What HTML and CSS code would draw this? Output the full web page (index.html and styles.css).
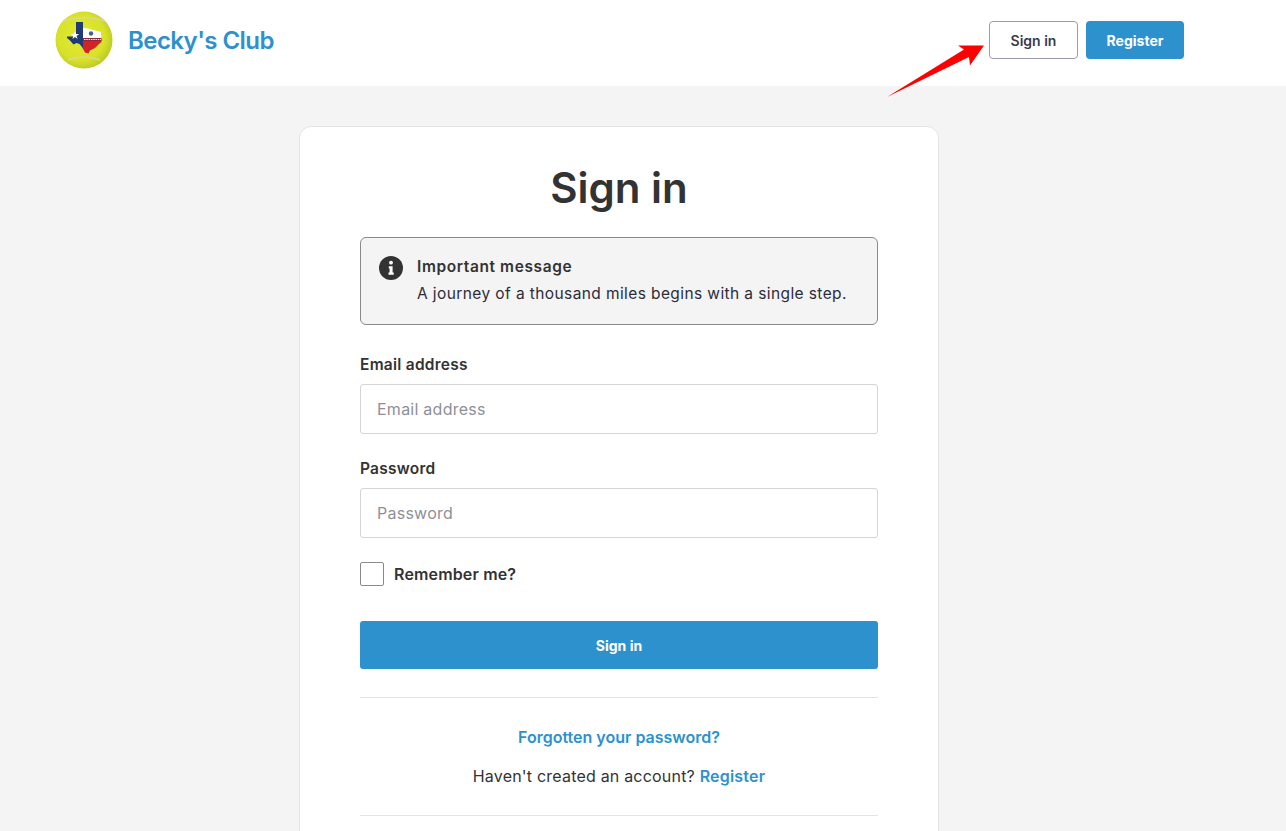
FILE: index.html
```html
<!DOCTYPE html>
<html lang="en">
<head>
<meta charset="utf-8">
<title>Sign in - Becky's Club</title>
<link rel="stylesheet" href="styles.css">
</head>
<body>
<header class="topbar">
  <a class="brand" href="#">
    <svg class="logo" viewBox="0 0 58 58" width="58" height="58" aria-hidden="true">
      <defs>
        <radialGradient id="ball" cx="45%" cy="45%" r="55%">
          <stop offset="0" stop-color="#e4ea30"/>
          <stop offset="0.75" stop-color="#d8e22a"/>
          <stop offset="1" stop-color="#c0cc24"/>
        </radialGradient>
        <clipPath id="texas">
          <path d="M21 11 H28 V17 L33 17.500 L38 19 L46 21 L46.500 31 L44 33 L40 37 L35 39.500 L33.500 42.500 L30 41.500 L27 36 L24.500 33 L21.500 32 L18.500 33.500 L15 29.500 L12 27 L12 25.500 H21 Z"/>
        </clipPath>
      </defs>
      <circle cx="29" cy="29" r="28.500" fill="url(#ball)"/>
      <path d="M8 10 Q29 3 50 10" fill="none" stroke="#d9d8a0" stroke-width="1.500"/>
      <path d="M13 49 Q29 43 45 49" fill="none" stroke="#d9d8a0" stroke-width="1.500"/>
      <g clip-path="url(#texas)">
        <rect x="10" y="9" width="18" height="35" fill="#1f3a75"/>
        <rect x="28" y="9" width="20" height="18" fill="#fff"/>
        <rect x="28" y="27" width="20" height="17" fill="#d2232a"/>
        <rect x="28" y="27" width="20" height="3" fill="#8e2a35"/>
        <path d="M29 28.500 H46" stroke="#fff" stroke-width="1.200" stroke-dasharray="1.500 0.800"/>
      </g>
      <path d="M20 20 l1 3 3.200 0 -2.600 1.900 1 3 -2.600 -1.900 -2.600 1.900 1 -3 -2.600 -1.900 3.200 0 Z" fill="#fff"/>
      <circle cx="36" cy="22.500" r="2.200" fill="#47608c"/>
    </svg>
    <span class="brand-name">Becky's Club</span>
  </a>
  <nav class="actions">
    <a class="btn btn-outline" href="#">Sign in</a>
    <a class="btn btn-primary" href="#">Register</a>
  </nav>
  <svg class="arrow" viewBox="0 0 100 60" width="100" height="60" aria-hidden="true">
    <path d="M97 6.500 L71 6.500 L77 10.500 L0 58 L82 18 L83 26.500 Z" fill="#fe0000"/>
  </svg>
</header>

<main class="page">
  <section class="card">
    <h1 class="title">Sign in</h1>
    <div class="notice">
      <svg class="notice-icon" viewBox="0 0 24 24" width="24" height="24" aria-hidden="true">
        <circle cx="12" cy="12" r="12" fill="#333"/>
        <circle cx="12" cy="6.700" r="1.900" fill="#fff"/>
        <path d="M9.800 10.300 H13.600 V16.500 H14.700 V18.800 H9.500 V16.500 H10.600 V12.600 H9.800 Z" fill="#fff"/>
      </svg>
      <div class="notice-text">
        <strong class="notice-title">Important message</strong>
        <p class="notice-body">A journey of a thousand miles begins with a single step.</p>
      </div>
    </div>
    <form class="form">
      <div class="field">
        <label class="label" for="email">Email address</label>
        <input class="input" id="email" type="text" placeholder="Email address">
      </div>
      <div class="field">
        <label class="label" for="password">Password</label>
        <input class="input" id="password" type="password" placeholder="Password">
      </div>
      <label class="remember"><span class="check"></span>Remember me?</label>
      <button class="submit" type="button">Sign in</button>
    </form>
    <div class="links">
      <a class="link forgot" href="#">Forgotten your password?</a>
      <p class="signup">Haven't created an account? <a class="link" href="#">Register</a></p>
    </div>
    <div class="end-rule"></div>
  </section>
</main>
</body>
</html>
```
FILE: styles.css
```css
* { box-sizing: border-box; }
html, body { margin: 0; height: 831px; overflow: hidden; }
body {
  background: #f4f4f4;
  color: #333;
  font-family: Inter, "Liberation Sans", sans-serif;
}
a { text-decoration: none; }
.topbar {
  position: relative;
  height: 86px;
  background: #fff;
  display: flex;
  align-items: center;
  justify-content: space-between;
  padding: 0 102px 6px 55px;
}
.brand { display: flex; align-items: center; gap: 15px; }
.logo { display: block; }
.brand-name { font-size: 24px; font-weight: 600; color: #2d91cd; letter-spacing: -0.55px; }
.actions { display: flex; gap: 8px; }
.btn {
  height: 38px;
  display: flex;
  align-items: center;
  justify-content: center;
  border-radius: 4px;
  font-size: 14px;
  font-weight: 600;
}
.btn-outline { width: 89px; border: 1px solid #9b9bab; color: #3a3a4a; background: #fff; }
.btn-primary { width: 98px; background: #2d91cd; color: #fff; font-weight: 700; }
.arrow { position: absolute; left: 887px; top: 39px; }
.page { display: flex; justify-content: center; padding: 40px 48px 0 0; }
.card {
  width: 640px;
  height: 760px;
  background: #fff;
  border: 1px solid #e4e4e4;
  border-radius: 12px;
  padding: 33px 60px 0;
}
.title {
  margin: 0 0 22px;
  height: 55px;
  line-height: 55px;
  text-align: center;
  font-size: 42px;
  font-weight: 600;
  color: #333;
}
.notice {
  height: 88px;
  background: #f4f4f4;
  border: 1px solid #8a8a8a;
  border-radius: 6px;
  display: flex;
  gap: 14px;
  padding: 18px;
}
.notice-icon { flex: none; }
.notice-title { display: block; font-size: 15.500px; font-weight: 600; line-height: 22px; letter-spacing: 0.6px; }
.notice-body { margin: 5px 0 0; font-size: 15.500px; line-height: 22px; color: #2c2c3a; letter-spacing: 0.4px; }
.form { margin-top: 29px; }
.field { margin-bottom: 24px; }
.label { display: block; font-size: 15.500px; font-weight: 600; line-height: 22px; margin-bottom: 8px; letter-spacing: 0.25px; }
.input {
  display: block;
  width: 100%;
  height: 50px;
  border: 1px solid #d4d4d8;
  border-radius: 3px;
  background: #fff;
  padding: 0 16px;
  font: 400 16px Inter, "Liberation Sans", sans-serif;
  letter-spacing: 0.25px;
  color: #333;
}
.input::placeholder { color: #8f8f98; opacity: 1; }
.remember {
  display: flex;
  align-items: center;
  gap: 10px;
  font-size: 16px;
  font-weight: 600;
  height: 24px;
  letter-spacing: 0.15px;
}
.check { width: 24px; height: 24px; border: 1px solid #8a8a8a; border-radius: 2px; background: #fff; }
.submit {
  display: block;
  width: 100%;
  height: 48px;
  margin-top: 35px;
  border: 0;
  border-radius: 3px;
  background: #2d91cd;
  color: #fff;
  font: 700 14px Inter, "Liberation Sans", sans-serif;
}
.links {
  margin-top: 28px;
  border-top: 1px solid #e4e4e4;
  padding-top: 27px;
  text-align: center;
  font-size: 16px;
  line-height: 24px;
}
.link { color: #2d91cd; font-weight: 600; }
.forgot { display: block; }
.signup { margin: 15px 0 0; letter-spacing: 0.2px; }
.end-rule { margin-top: 27px; border-top: 1px solid #e4e4e4; }
```
